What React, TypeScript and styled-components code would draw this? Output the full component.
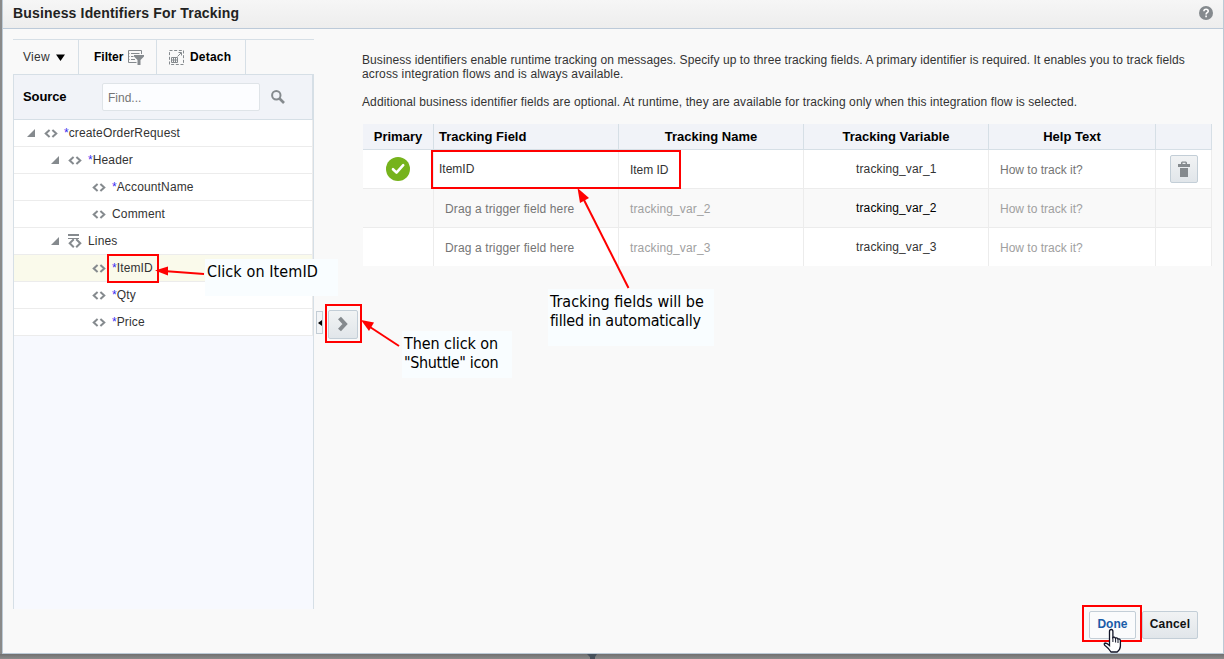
import React from 'react';
import styled, { createGlobalStyle } from 'styled-components';

const GlobalStyle = createGlobalStyle`
  *, *::before, *::after { box-sizing: border-box; }
  html, body { margin: 0; padding: 0; background: #8a8a8a; overflow: hidden; }
  body { font: 12px/14px 'Liberation Sans', Arial, sans-serif; color: #333; }
`;

const Page = styled.div`
  position: relative;
  width: 1224px;
  height: 659px;
  overflow: hidden;
  padding-left: 2px;
  background: linear-gradient(#8a8a8a 654px, #707070 654px, #8b8b8b 659px);
`;

const Dialog = styled.div`
  display: flex;
  flex-direction: column;
  width: 1222px;
  height: 654px;
  background: #f9f9f9;
  border: 1px solid #bccad6;
  border-top: 0;
`;

const TitleBar = styled.header`
  display: flex;
  align-items: flex-start;
  justify-content: space-between;
  flex: none;
  height: 29px;
  padding: 5px 10px 0;
  background: linear-gradient(#f6f6f6, #ededed);
  border-bottom: 1px solid #bccad9;
`;

const Title = styled.h1`
  margin: 0;
  font-size: 14px;
  line-height: 16px;
  font-weight: bold;
  letter-spacing: 0.16px;
  color: #222;
`;

const HelpIcon = styled.svg`
  margin-top: 1px;
`;

const Body = styled.div`
  display: flex;
  flex: 1;
  padding: 10px 11px 0 10px;
`;

const SourcePane = styled.section`
  width: 301px;
  height: 570px;
  display: flex;
  flex-direction: column;
`;

const Toolbar = styled.div`
  display: flex;
  height: 35px;
  border-top: 1px solid #d6dfe6;
`;

const ToolButton = styled.div<{ $w: number; $bold?: boolean; $gap: number; $pad: number; $ls: number }>`
  display: flex;
  align-items: center;
  width: ${(p) => p.$w}px;
  padding-left: ${(p) => p.$pad}px;
  gap: ${(p) => p.$gap}px;
  border-right: 1px solid #d6dfe6;
  color: ${(p) => (p.$bold ? '#000' : '#333')};
  font-weight: ${(p) => (p.$bold ? 'bold' : 'normal')};
  letter-spacing: ${(p) => p.$ls}px;
`;

const TreePanel = styled.div`
  flex: 1;
  background: #f7f9fe;
  border: 1px solid #d6dfe6;
  border-bottom: 0;
`;

const TreeHeader = styled.div`
  display: flex;
  align-items: center;
  height: 45px;
  padding-left: 9px;
  background: #f1f3f8;
  border-bottom: 1px solid #d6dfe6;
  border-right: 1px solid #d6dfe6;
`;

const TreeTitle = styled.div`
  width: 79px;
  font-size: 13px;
  font-weight: bold;
  letter-spacing: -0.1px;
  color: #000;
`;

const SearchField = styled.div`
  width: 158px;
  height: 28px;
  padding: 7px 5px 0;
  margin-right: 11px;
  background: #fcfdff;
  border: 1px solid #dfe4e8;
  border-radius: 2px;
  color: #757575;
`;

const TreeRow = styled.div<{ $depth: number; $selected?: boolean }>`
  display: flex;
  align-items: center;
  height: 27px;
  padding-left: ${(p) => 12 + p.$depth * 24}px;
  background: ${(p) => (p.$selected ? '#fafaeb' : '#fff')};
  border-bottom: 1px solid #ececec;
  border-right: 1px solid #ececec;
`;

const Toggle = styled.span`
  display: flex;
  width: 18px;
  flex: none;
`;

const NodeIcon = styled.span`
  display: flex;
  width: 20px;
  flex: none;
`;

const NodeLabel = styled.span`
  letter-spacing: 0.15px;
`;

const Required = styled.span`
  color: #3a2cf0;
  letter-spacing: 0;
`;

const Splitter = styled.div`
  display: flex;
  align-items: flex-start;
  width: 49px;
  padding: 271px 0 0 2px;
  gap: 5px;
`;

const Grip = styled.div`
  display: flex;
  align-items: center;
  justify-content: center;
  width: 7px;
  height: 23px;
  margin-top: 1px;
  background: #f3f5f7;
  border: 1px solid #c3cdd5;
`;

const IconButton = styled.button<{ $w: number; $h: number }>`
  display: flex;
  align-items: center;
  justify-content: center;
  width: ${(p) => p.$w}px;
  height: ${(p) => p.$h}px;
  padding: 0;
  background: linear-gradient(#f1f3f4, #e1e6ea);
  border: 1px solid #c3ced7;
  border-radius: 2px;
`;

const Main = styled.section`
  display: flex;
  flex-direction: column;
  flex: 1;
  padding-top: 14px;
`;

const Paragraph = styled.p`
  margin: 0 0 14px -1px;
  white-space: nowrap;
`;

const Line = styled.span<{ $ls: number }>`
  display: block;
  letter-spacing: ${(p) => p.$ls}px;
`;

const Table = styled.div`
  display: flex;
  flex-direction: column;
  width: 849px;
  margin-top: 1px;
`;

const TableRow = styled.div<{ $head?: boolean; $alt?: boolean }>`
  display: grid;
  grid-template-columns: 71px 185px 185px 185px 167px 56px;
  height: ${(p) => (p.$head ? 26 : 39)}px;
  background: ${(p) => (p.$head ? '#f1f3f8' : p.$alt ? '#f9f9f9' : '#fff')};
  border-bottom: 1px solid ${(p) => (p.$head ? '#d6dfe6' : '#ececec')};
  &:last-child { border-bottom-color: transparent; background-clip: padding-box; }
`;

const HeadCell = styled.div<{ $left?: boolean }>`
  padding: 5px 0 0 ${(p) => (p.$left ? 5 : 0)}px;
  border-right: 1px solid #d6dfe6;
  text-align: ${(p) => (p.$left ? 'left' : 'center')};
  font-size: 13px;
  line-height: 15px;
  font-weight: bold;
  color: #000;
`;

const Cell = styled.div<{ $pad?: number; $top?: number; $tone?: string; $ls?: number }>`
  display: flex;
  align-items: flex-start;
  padding: ${(p) => p.$top ?? 12}px 0 0 ${(p) => p.$pad ?? 0}px;
  border-right: 1px solid #ececec;
  color: ${(p) => p.$tone ?? '#333'};
  letter-spacing: ${(p) => p.$ls ?? 0.13}px;
`;

const Footer = styled.footer`
  display: flex;
  justify-content: flex-end;
  flex: none;
  gap: 6px;
  height: 42px;
  padding-right: 25px;
`;

const ActionButton = styled.button<{ $primary?: boolean }>`
  width: ${(p) => (p.$primary ? 47 : 56)}px;
  height: 28px;
  padding: 0 0 2px;
  font: bold 12px/14px 'Liberation Sans', Arial, sans-serif;
  letter-spacing: ${(p) => (p.$primary ? 0.05 : 0.2)}px;
  color: ${(p) => (p.$primary ? '#1a5ca8' : '#111')};
  background: ${(p) => (p.$primary ? '#fafbfc' : 'linear-gradient(#f1f3f4, #e1e6ea)')};
  border: 1px solid #c3ced7;
  border-radius: 2px;
`;

const Highlight = styled.div<{ $x: number; $y: number; $w: number; $h: number }>`
  position: absolute;
  left: ${(p) => p.$x}px;
  top: ${(p) => p.$y}px;
  width: ${(p) => p.$w}px;
  height: ${(p) => p.$h}px;
  border: 2px solid #f00;
`;

const Callout = styled.div<{ $x: number; $y: number; $w: number; $h: number }>`
  position: absolute;
  left: ${(p) => p.$x}px;
  top: ${(p) => p.$y}px;
  width: ${(p) => p.$w}px;
  height: ${(p) => p.$h}px;
  padding: 3px 2px;
  background: #f9fdff;
  color: #000;
  font: 16px/19px 'DejaVu Sans Condensed', 'Noto Sans', sans-serif;
  white-space: nowrap;
`;

const Overlay = styled.svg`
  position: absolute;
  left: 0;
  top: 0;
`;

const CodeIcon = () => (
  <svg width="14" height="9" viewBox="0 0 14 9" fill="none" stroke="#858a8e" strokeWidth="2">
    <path d="M5.600 .9 1.700 4.500 5.600 8.100M8.400 .9 12.300 4.500 8.400 8.100" />
  </svg>
);

const ListIcon = () => (
  <svg width="14" height="14" viewBox="0 0 14 14" fill="none" stroke="#858a8e">
    <path d="M0 1h11" strokeWidth="2" />
    <path d="M0 4.500h11" />
    <path d="M5.800 5.300 1.700 9.200 5.800 13.300M8.200 5.300 12.300 9.200 8.200 13.300" strokeWidth="2" />
  </svg>
);

const ExpandedIcon = () => (
  <svg width="10" height="8" viewBox="0 0 10 8"><path d="M9 0v8H1z" fill="#858a8e" /></svg>
);

const FilterIcon = () => (
  <svg width="16" height="15" viewBox="0 0 16 15">
    <path d="M13.500 4V.5H.5v12h8M3 3.500h8.500M3 6.500h2.500M3 9.500h4" fill="none" stroke="#858a8e" />
    <path d="M.5 3.500h1M.5 6.500h1M.5 9.500h1" stroke="#858a8e" />
    <path d="M6 5h10v1.500l-3.500 3.500v5h-3v-5L6 6.500z" fill="#858a8e" />
  </svg>
);

const DetachIcon = () => (
  <svg width="15" height="15" viewBox="0 0 15 15" fill="none" stroke="#858a8e">
    <rect x=".5" y=".5" width="14" height="14" strokeDasharray="3 1.670" />
    <path d="M2.500 7.500h6v5h-6zM2.500 10h6M4.500 7.500v5M6.500 7.500v5" />
    <path d="M8.500 6.500 12 3M9.500 2.500h3v3" />
  </svg>
);

type Node = { label: string; depth: number; required?: boolean; expanded?: boolean; list?: boolean; selected?: boolean };

const nodes: Node[] = [
  { label: 'createOrderRequest', depth: 0, required: true, expanded: true },
  { label: 'Header', depth: 1, required: true, expanded: true },
  { label: 'AccountName', depth: 2, required: true },
  { label: 'Comment', depth: 2 },
  { label: 'Lines', depth: 1, expanded: true, list: true },
  { label: 'ItemID', depth: 2, required: true, selected: true },
  { label: 'Qty', depth: 2, required: true },
  { label: 'Price', depth: 2, required: true },
];

export default function App() {
  return (
    <Page>
      <GlobalStyle />
      <Dialog>
        <TitleBar>
          <Title>Business Identifiers For Tracking</Title>
          <HelpIcon width="14" height="14" viewBox="0 0 14 14">
            <circle cx="7" cy="7" r="7" fill="#858a8e" />
            <path d="M4.900 5.200c0-2.700 4.300-2.600 4.300 0 0 1.500-2.100 1.600-2.100 3.200M7.100 9.500v1.700" fill="none" stroke="#fff" strokeWidth="1.600" />
          </HelpIcon>
        </TitleBar>
        <Body>
          <SourcePane>
            <Toolbar>
              <ToolButton $w={66} $gap={6} $pad={10} $ls={0.25}>
                View
                <svg width="9" height="7" viewBox="0 0 9 7"><path d="M0 .5h9L4.500 7z" fill="#000" /></svg>
              </ToolButton>
              <ToolButton $w={78} $bold $gap={5} $pad={15} $ls={0}>
                Filter
                <FilterIcon />
              </ToolButton>
              <ToolButton $w={89} $bold $gap={6} $pad={12} $ls={0.2}>
                <DetachIcon />
                Detach
              </ToolButton>
            </Toolbar>
            <TreePanel>
              <TreeHeader>
                <TreeTitle>Source</TreeTitle>
                <SearchField>Find...</SearchField>
                <svg width="14" height="14" viewBox="0 0 14 14" fill="none" stroke="#858a8e">
                  <circle cx="5.300" cy="5.300" r="4.200" strokeWidth="2" />
                  <path d="M8.500 8.500l4.500 4.500" strokeWidth="2.600" />
                </svg>
              </TreeHeader>
              {nodes.map((n) => (
                <TreeRow key={n.label} $depth={n.depth} $selected={n.selected}>
                  <Toggle>{n.expanded && <ExpandedIcon />}</Toggle>
                  <NodeIcon>{n.list ? <ListIcon /> : <CodeIcon />}</NodeIcon>
                  <NodeLabel>
                    {n.required && <Required>*</Required>}
                    {n.label}
                  </NodeLabel>
                </TreeRow>
              ))}
            </TreePanel>
          </SourcePane>
          <Splitter>
            <Grip>
              <svg width="4" height="6" viewBox="0 0 4 6"><path d="M4 0v6L0 3z" fill="#000" /></svg>
            </Grip>
            <IconButton $w={30} $h={29}>
              <svg width="13" height="17" viewBox="0 0 13 17"><path d="M2.500 2l5.500 6-5.500 6" fill="none" stroke="#858a8e" strokeWidth="4" /></svg>
            </IconButton>
          </Splitter>
          <Main>
            <Paragraph>
              <Line $ls={0.082}>
                Business identifiers enable runtime tracking on messages. Specify up to three tracking fields. A primary identifier is required. It enables you to track fields
              </Line>
              <Line $ls={0.135}>across integration flows and is always available.</Line>
            </Paragraph>
            <Paragraph>
              <Line $ls={0.106}>
                Additional business identifier fields are optional. At runtime, they are available for tracking only when this integration flow is selected.
              </Line>
            </Paragraph>
            <Table>
              <TableRow $head>
                <HeadCell>Primary</HeadCell>
                <HeadCell $left>Tracking Field</HeadCell>
                <HeadCell>Tracking Name</HeadCell>
                <HeadCell>Tracking Variable</HeadCell>
                <HeadCell>Help Text</HeadCell>
                <HeadCell />
              </TableRow>
              <TableRow>
                <Cell $pad={23} $top={7}>
                  <svg width="24" height="24" viewBox="0 0 24 24">
                    <circle cx="12" cy="12" r="12" fill="#76b31c" />
                    <path d="M7 12.200l3.500 3.400 6.700-7.400" fill="none" stroke="#fff" strokeWidth="2.600" strokeLinecap="round" strokeLinejoin="round" />
                  </svg>
                </Cell>
                <Cell $pad={5} $ls={0}>ItemID</Cell>
                <Cell $pad={11} $top={13} $ls={-0.05}>Item ID</Cell>
                <Cell $pad={52}>tracking_var_1</Cell>
                <Cell $pad={11} $top={13} $tone="#757575" $ls={0}>How to track it?</Cell>
                <Cell $pad={14} $top={5}>
                  <IconButton $w={28} $h={28}>
                    <svg width="12" height="16" viewBox="0 0 12 16" fill="#858a8e">
                      <path d="M3 3V1.500L4 .5h4l1 1V3h3v3H0V3zM4.500 3h3V1.700h-3zM2 7h8v9H2z" fillRule="evenodd" />
                    </svg>
                  </IconButton>
                </Cell>
              </TableRow>
              <TableRow $alt>
                <Cell />
                <Cell $pad={11} $top={13} $tone="#757575">Drag a trigger field here</Cell>
                <Cell $pad={11} $top={13} $tone="#a0a0a0">tracking_var_2</Cell>
                <Cell $pad={52} $tone="#000">tracking_var_2</Cell>
                <Cell $pad={11} $top={13} $tone="#a0a0a0" $ls={0}>How to track it?</Cell>
                <Cell />
              </TableRow>
              <TableRow>
                <Cell />
                <Cell $pad={11} $top={13} $tone="#757575">Drag a trigger field here</Cell>
                <Cell $pad={11} $top={13} $tone="#a0a0a0">tracking_var_3</Cell>
                <Cell $pad={52}>tracking_var_3</Cell>
                <Cell $pad={11} $top={13} $tone="#a0a0a0" $ls={0}>How to track it?</Cell>
                <Cell />
              </TableRow>
            </Table>
          </Main>
        </Body>
        <Footer>
          <ActionButton $primary>Done</ActionButton>
          <ActionButton>Cancel</ActionButton>
        </Footer>
      </Dialog>

      <Callout $x={205} $y={259} $w={133} $h={37}>
        <Line $ls={0.1}>Click on ItemID</Line>
      </Callout>
      <Callout $x={402} $y={331} $w={110} $h={47}>
        <Line $ls={-0.08}>Then click on</Line>
        <Line $ls={-0.35}>"Shuttle" icon</Line>
      </Callout>
      <Callout $x={548} $y={289} $w={166} $h={57}>
        <Line $ls={0}>Tracking fields will be</Line>
        <Line $ls={-0.2}>filled in automatically</Line>
      </Callout>
      <Highlight $x={107} $y={254} $w={52} $h={29} />
      <Highlight $x={325} $y={304} $w={37} $h={39} />
      <Highlight $x={431} $y={150} $w={250} $h={39} />
      <Highlight $x={1082} $y={605} $w={60} $h={37} />
      <Overlay width="1224" height="659" viewBox="0 0 1224 659">
        <g stroke="#f00" strokeWidth="2" fill="#f00">
          <path d="M204 274L167 271.300" />
          <path d="M155 270.500L168 266.500V275.500z" stroke="none" />
          <path d="M399 346L370 327" />
          <path d="M361 320L374 322.500L369 331z" stroke="none" />
          <path d="M628.500 288L584 200" />
          <path d="M577.500 188L589 198L580 203z" stroke="none" />
        </g>
        <path d="M1109.500 645V631.500q0-2 1.700-2t1.700 2v6q1.300-1.200 2.600.8 1.300-1 2.500.7 2.400-.7 2.400 2v5q0 3.500-3.200 6h-6.200q-2-3.500-6-6.500-1.500-2 0-2.500 2 0 4.500 2.500z" fill="#fff" stroke="#111427" strokeWidth="1.300" />
        <path d="M1112.900 637v5M1115.600 638.500v4M1118 639v4" stroke="#111427" />
        <path d="M587 654h10l-2 3v2h-5v-2z" fill="#46505a" />
      </Overlay>
    </Page>
  );
}
